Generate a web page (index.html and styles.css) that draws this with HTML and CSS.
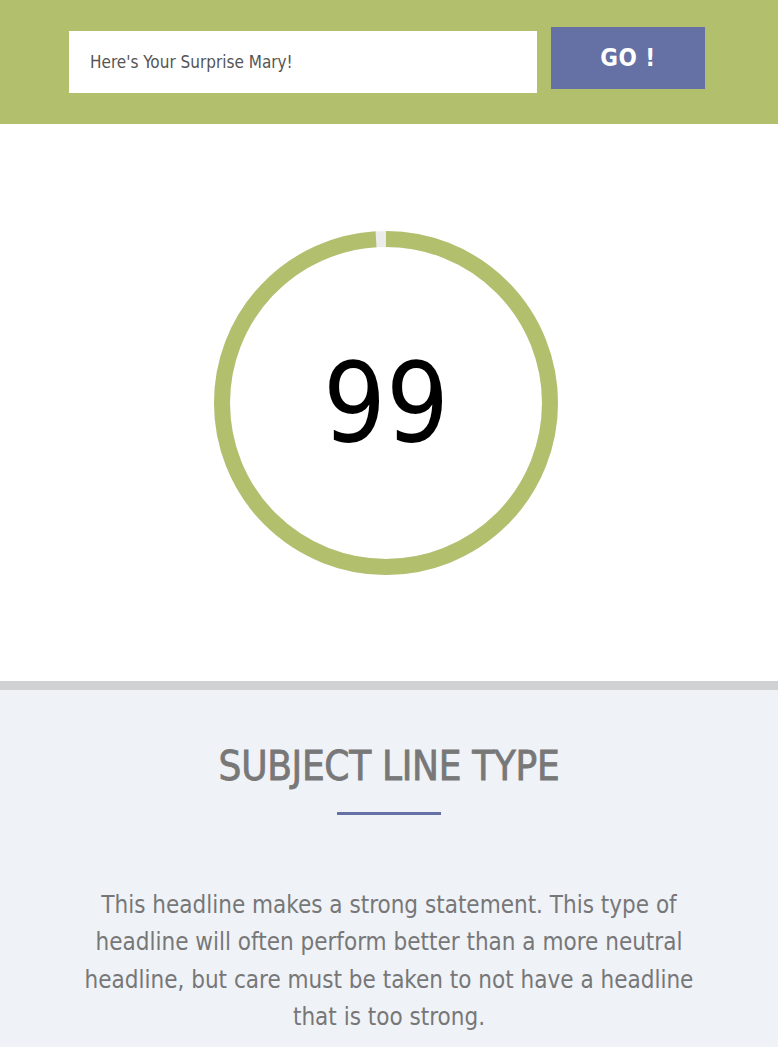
FILE: index.html
```html
<!DOCTYPE html>
<html>
<head>
<meta charset="utf-8">
<link rel="stylesheet" href="styles.css">
</head>
<body>
<div class="page">
  <header class="topbar">
    <div class="field">Here's Your Surprise Mary!</div>
    <button class="go">GO !</button>
  </header>
  <section class="score">
    <div class="ring">
      <svg width="344" height="344" viewBox="0 0 344 344">
        <circle cx="172" cy="172" r="164" fill="none" stroke="#ececec" stroke-width="16"/>
        <circle cx="172" cy="172" r="164" fill="none" stroke="#b2bf6d" stroke-width="16"
          stroke-dasharray="1020 1030.4" transform="rotate(-90 172 172)"/>
      </svg>
      <div class="num">99</div>
    </div>
  </section>
  <section class="info">
    <h2 class="title">SUBJECT LINE TYPE</h2>
    <div class="rule"></div>
    <p class="desc">This headline makes a strong statement. This type of headline will often perform better than a more neutral headline, but care must be taken to not have a headline that is too strong.</p>
  </section>
</div>
</body>
</html>
```

FILE: styles.css
```css
html, body {
  margin: 0;
  padding: 0;
  background: #ffffff;
}
.page {
  width: 778px;
  font-family: "Liberation Sans Narrow", "DejaVu Sans Condensed", "Liberation Sans", sans-serif;
}
.topbar {
  background: #b2bf6d;
  height: 124px;
  display: flex;
  align-items: flex-start;
  box-sizing: border-box;
  padding-left: 69px;
}
.field {
  margin-top: 31px;
  width: 468px;
  height: 62px;
  background: #ffffff;
  box-sizing: border-box;
  padding-left: 21px;
  display: flex;
  align-items: center;
  font-size: 17px;
  color: #555555;
}
.go {
  margin-top: 27px;
  margin-left: 14px;
  width: 154px;
  height: 62px;
  background: #6571a4;
  border: none;
  color: #ffffff;
  font-family: inherit;
  font-weight: bold;
  font-size: 24px;
  letter-spacing: 0.5px;
  padding: 0;
}
.score {
  height: 566px;
  display: flex;
  justify-content: center;
  align-items: flex-start;
  box-sizing: border-box;
  padding-top: 107px;
  border-bottom: 9px solid #d0d1d3;
}
.ring {
  position: relative;
  width: 344px;
  height: 344px;
  margin-left: -6px;
}
.ring svg {
  display: block;
}
.num {
  position: absolute;
  inset: 0;
  display: flex;
  align-items: center;
  justify-content: center;
  font-size: 110px;
  color: #000000;
  font-family: "DejaVu Sans Condensed", sans-serif;
  font-weight: 300;
}
.info {
  background: #eff2f7;
  padding-top: 52px;
  padding-bottom: 40px;
  text-align: center;
}
.title {
  margin: 0;
  font-size: 40px;
  font-weight: normal;
  letter-spacing: -0.3px;
  color: #787878;
  -webkit-text-stroke: 0.8px #787878;
  line-height: 48px;
}
.rule {
  width: 104px;
  height: 3px;
  background: #6571a4;
  margin: 22px auto 0;
}
.desc {
  margin: 72px auto 0;
  width: 640px;
  font-size: 24px;
  line-height: 37.3px;
  color: #777777;
}
```
